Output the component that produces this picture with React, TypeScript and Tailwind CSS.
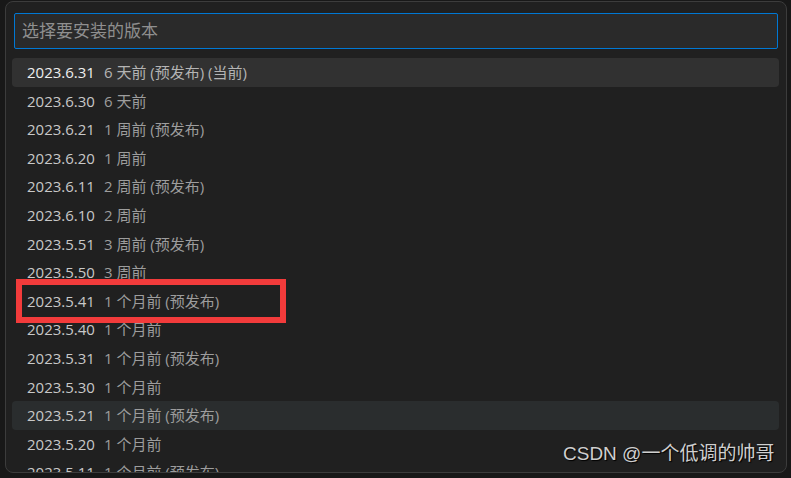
import React from "react";

interface VersionItem {
  version: string;
  desc: string;
}

const versions: VersionItem[] = [
  { version: "2023.6.31", desc: "6 天前 (预发布) (当前)" },
  { version: "2023.6.30", desc: "6 天前" },
  { version: "2023.6.21", desc: "1 周前 (预发布)" },
  { version: "2023.6.20", desc: "1 周前" },
  { version: "2023.6.11", desc: "2 周前 (预发布)" },
  { version: "2023.6.10", desc: "2 周前" },
  { version: "2023.5.51", desc: "3 周前 (预发布)" },
  { version: "2023.5.50", desc: "3 周前" },
  { version: "2023.5.41", desc: "1 个月前 (预发布)" },
  { version: "2023.5.40", desc: "1 个月前" },
  { version: "2023.5.31", desc: "1 个月前 (预发布)" },
  { version: "2023.5.30", desc: "1 个月前" },
  { version: "2023.5.21", desc: "1 个月前 (预发布)" },
  { version: "2023.5.20", desc: "1 个月前" },
  { version: "2023.5.11", desc: "1 个月前 (预发布)" },
];

const App = () => {
  return (
    <div
      className="relative w-[791px] h-[478px] overflow-hidden bg-[#181818] pl-[5px] pt-[1px]"
      style={{ fontFamily: '"Open Sans", "Noto Sans CJK SC", sans-serif' }}
    >
      <div className="w-[782px] h-[472px] rounded-[8px] border border-[#3c3c3c] bg-[#202020] overflow-hidden pt-[11px]">
        <div className="px-2">
          <div className="h-[36px] border border-[#0078d4] rounded-[2px] bg-[#2a2a2a] flex items-center pl-[7px] text-[17px] text-[#8f8f8f]">
            选择要安装的版本
          </div>
        </div>

        <div className="mt-[9px] pl-[6px] pr-[7px]">
          {versions.map((v, i) => {
            const isActive = i === 0;
            const isHover = i === 12;
            return (
              <div
                key={v.version}
                className={`h-[28.6px] flex items-center pl-[15px] rounded-[4px] text-[15px] whitespace-nowrap ${
                  isActive ? "bg-[#313131]" : isHover ? "bg-[#2a2d2e]" : ""
                }`}
              >
                <span className={isActive ? "text-[#eeeeee]" : "text-[#c8c8c8]"}>{v.version}</span>
                <span className={`ml-[9px] ${isActive ? "text-[#b4b4b4]" : "text-[#9d9d9d]"}`}>{v.desc}</span>
              </div>
            );
          })}
        </div>
      </div>

      {/* annotation box */}
      <div className="absolute left-[16px] top-[279px] w-[270px] h-[44px] border-[6px] border-[#f23b3b]" />

      {/* watermark */}
      <div
        className="absolute left-[563px] top-[444px] text-[19px] text-[#cfcfcf] leading-none whitespace-nowrap"
        style={{ fontFamily: '"Liberation Sans", "Noto Sans CJK SC", sans-serif', textShadow: "1px 1px 1px #000" }}
      >
        CSDN @一个低调的帅哥
      </div>
    </div>
  );
};

export default App;
